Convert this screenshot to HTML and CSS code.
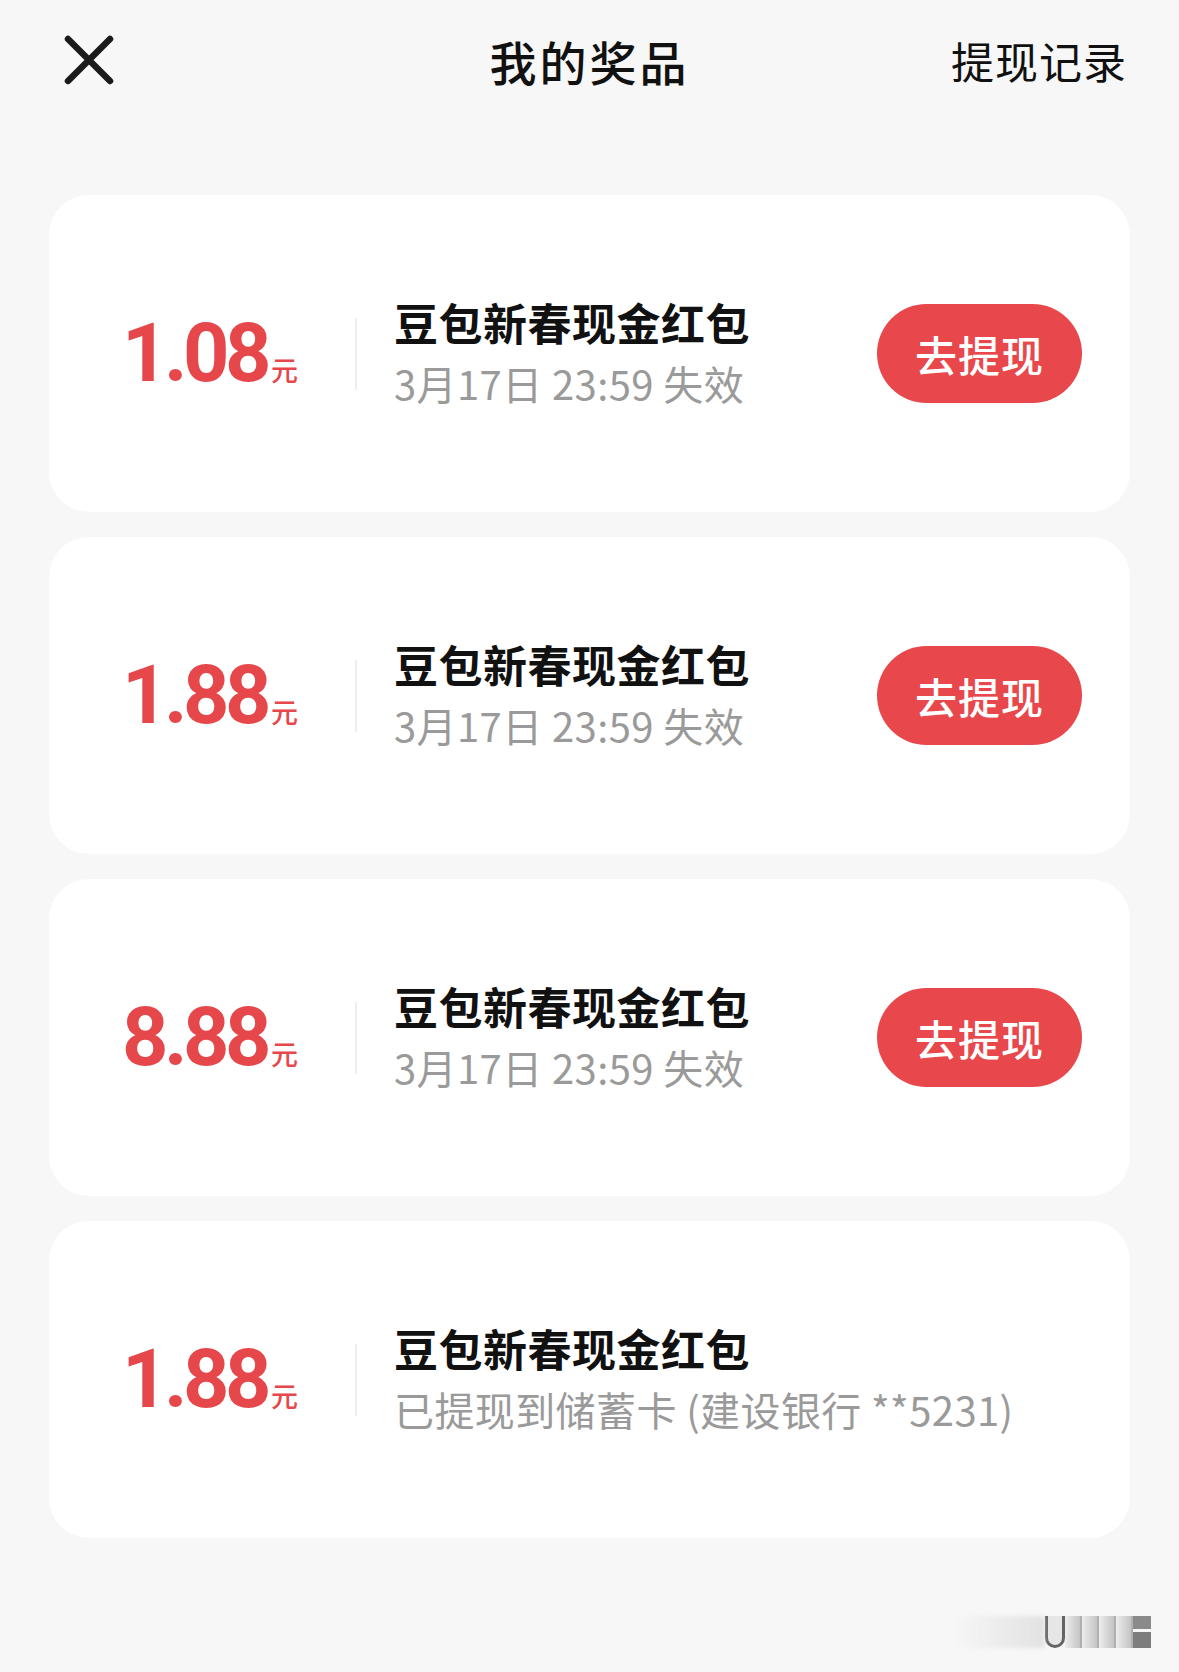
FILE: index.html
```html
<!DOCTYPE html>
<html lang="zh-CN">
<head>
<meta charset="utf-8">
<title>我的奖品</title>
<link rel="stylesheet" href="styles.css">
</head>
<body>
<div class="page">
  <header class="topbar">
    <div class="close">
      <svg width="50" height="50" viewBox="0 0 50 50"><path d="M4 4 L46 46 M46 4 L4 46" stroke="#1a1a1a" stroke-width="6.5" stroke-linecap="round" fill="none"/></svg>
    </div>
    <h1 class="title">我的奖品</h1>
    <div class="record">提现记录</div>
  </header>

  <main class="list">
    <div class="card">
      <div class="amount"><span class="num">1.08</span><span class="unit">元</span></div>
      <div class="sep"></div>
      <div class="info">
        <div class="name">豆包新春现金红包</div>
        <div class="sub">3月17日 23:59 失效</div>
      </div>
      <button class="btn">去提现</button>
    </div>
    <div class="card">
      <div class="amount"><span class="num">1.88</span><span class="unit">元</span></div>
      <div class="sep"></div>
      <div class="info">
        <div class="name">豆包新春现金红包</div>
        <div class="sub">3月17日 23:59 失效</div>
      </div>
      <button class="btn">去提现</button>
    </div>
    <div class="card">
      <div class="amount"><span class="num">8.88</span><span class="unit">元</span></div>
      <div class="sep"></div>
      <div class="info">
        <div class="name">豆包新春现金红包</div>
        <div class="sub">3月17日 23:59 失效</div>
      </div>
      <button class="btn">去提现</button>
    </div>
    <div class="card">
      <div class="amount"><span class="num">1.88</span><span class="unit">元</span></div>
      <div class="sep"></div>
      <div class="info">
        <div class="name">豆包新春现金红包</div>
        <div class="sub">已提现到储蓄卡 (建设银行 **5231)</div>
      </div>
    </div>
  </main>

  <div class="watermark">
    <span class="wm-fade"></span>
    <span class="wm-u"></span>
    <span class="wm-bar"></span>
    <span class="wm-bar"></span>
    <span class="wm-bar"></span>
    <span class="wm-bar"></span>
    <span class="wm-end"></span>
  </div>
</div>
</body>
</html>
```

FILE: styles.css
```css
* { box-sizing: border-box; }
html, body {
  margin: 0;
  padding: 0;
  background: #f7f7f7;
}
body {
  font-family: "Noto Sans CJK SC", "Noto Sans", sans-serif;
  color: #111;
}
.page {
  position: relative;
  width: 1179px;
  height: 1672px;
  overflow: hidden;
}
.topbar {
  height: 120px;
  display: grid;
  grid-template-columns: 1fr auto 1fr;
  align-items: center;
  padding: 0 52px;
}
.close {
  display: flex;
  align-items: center;
  justify-self: start;
  margin-left: 12px;
}
.close svg { display: block; }
.title {
  margin: 0;
  font-size: 47px;
  font-weight: 500;
  letter-spacing: 3px;
  color: #111;
  line-height: 1;
}
.record {
  justify-self: end;
  font-size: 43px;
  font-weight: 400;
  letter-spacing: 1px;
  color: #111;
  line-height: 1;
}
.list {
  margin-top: 75px;
  padding: 0 49px;
  display: flex;
  flex-direction: column;
  gap: 25px;
}
.card {
  height: 317px;
  background: #fff;
  border-radius: 40px;
  display: flex;
  align-items: center;
  padding: 0 48px 0 20px;
}
.amount {
  width: 282px;
  flex-shrink: 0;
  text-align: center;
  color: #e5474b;
  white-space: nowrap;
  line-height: 1;
}
.num {
  font-family: Roboto, "Liberation Sans", sans-serif;
  font-weight: 700;
  font-size: 81px;
  letter-spacing: -4.5px;
}
.unit {
  font-size: 27px;
  font-weight: 500;
  margin-left: 4px;
}
.sep {
  width: 2px;
  height: 72px;
  background: #eeeeee;
  margin-left: 4px;
  flex-shrink: 0;
}
.info {
  flex: 1;
  margin-left: 37px;
  display: flex;
  flex-direction: column;
  gap: 14px;
  margin-top: -4px;
}
.name {
  font-size: 44px;
  font-weight: 600;
  letter-spacing: 0.5px;
  color: #111;
  line-height: 1.1;
  white-space: nowrap;
}
.sub {
  font-size: 40px;
  font-weight: 400;
  letter-spacing: 0.4px;
  color: #9a9a9a;
  line-height: 1.1;
  white-space: nowrap;
}
.btn {
  width: 205px;
  height: 99px;
  border: none;
  border-radius: 50px;
  background: #e8474b;
  color: #fff;
  font-family: "Noto Sans CJK SC", sans-serif;
  font-size: 42px;
  font-weight: 500;
  letter-spacing: 1px;
  flex-shrink: 0;
  padding: 0;
}
.watermark {
  position: absolute;
  left: 953px;
  top: 1616px;
  width: 198px;
  height: 32px;
  display: flex;
  align-items: stretch;
  opacity: 0.75;
}
.wm-fade {
  flex: 1;
  background: linear-gradient(to right, rgba(200,200,200,0), rgba(200,200,200,0.6));
  filter: blur(2px);
}
.wm-u {
  width: 20px;
  border: 3px solid #333;
  border-top: none;
  border-radius: 0 0 10px 10px;
  background: rgba(210,210,210,0.6);
}
.wm-bar {
  width: 17px;
  background: linear-gradient(to right, rgba(220,220,220,0.5), rgba(150,150,150,0.7));
  border-right: 2px solid #999;
}
.wm-end {
  width: 18px;
  background: linear-gradient(to bottom, #666 0 40%, transparent 40% 50%, #555 50% 100%);
}
```
